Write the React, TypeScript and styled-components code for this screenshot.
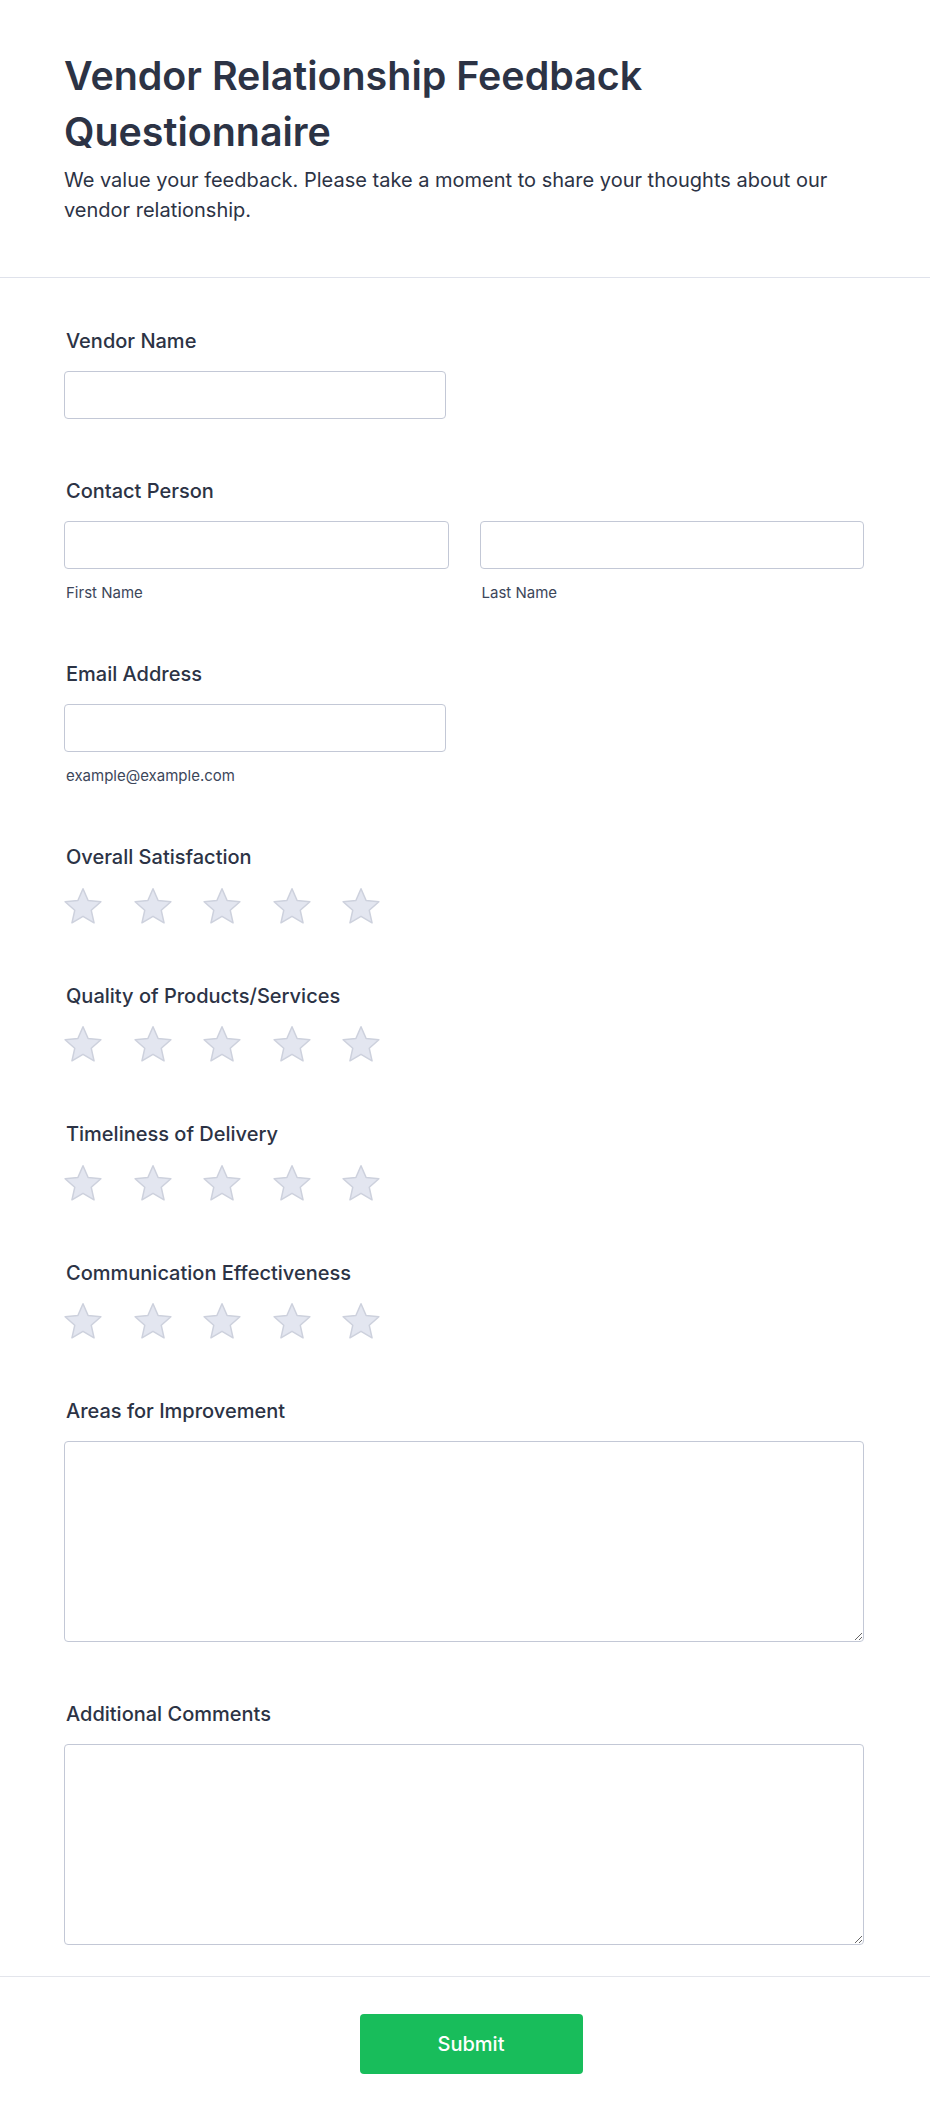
import styled, { createGlobalStyle } from "styled-components";

const GlobalStyle = createGlobalStyle`
  body {
    margin: 0;
    background: #ffffff;
    font-family: Inter, "Noto Sans", sans-serif;
    color: #2c3345;
  }
  * { box-sizing: border-box; }
`;

const Page = styled.div`
  width: 930px;
  background: #ffffff;
`;

const Header = styled.header`
  padding: 48px 66px 52px 64px;
  border-bottom: 1px solid #dfe2eb;
`;

const Title = styled.h1`
  margin: 0;
  font-size: 39.4px;
  line-height: 56px;
  font-weight: 600;
  color: #2c3345;
`;

const Subtitle = styled.p`
  margin: 5px 0 0;
  font-size: 20px;
  line-height: 30px;
  color: #2c3345;
`;

const FormBody = styled.div`
  display: flex;
  flex-direction: column;
  gap: 57px;
  padding: 48px 66px 31px 64px;
  border-bottom: 1px solid #e3e5ec;
`;

const Field = styled.div`
  display: flex;
  flex-direction: column;
`;

const Label = styled.label`
  font-size: 20px;
  line-height: 30px;
  font-weight: 500;
  padding-left: 2px;
  margin-bottom: 15px;
  color: #2c3345;
`;

const Input = styled.input<{ $half?: boolean }>`
  width: ${(p) => (p.$half ? "382px" : "100%")};
  height: 48px;
  border: 1px solid #c3c8d6;
  border-radius: 4px;
  padding: 0 12px;
  font: inherit;
  font-size: 16px;
  background: #fff;
  outline: none;
`;

const NameGrid = styled.div`
  display: grid;
  grid-template-columns: 1fr 1fr;
  column-gap: 31px;
`;

const Column = styled.div`
  display: flex;
  flex-direction: column;
`;

const SubLabel = styled.span`
  margin-top: 14px;
  padding-left: 2px;
  font-size: 15px;
  line-height: 19px;
  color: #3c465a;
`;

const Stars = styled.div`
  display: flex;
  gap: 31.5px;
  padding-top: 0.5px;
`;

const TextArea = styled.textarea`
  width: 100%;
  height: 201px;
  border: 1px solid #c3c8d6;
  border-radius: 4px;
  padding: 10px 12px;
  font: inherit;
  font-size: 16px;
  resize: vertical;
  outline: none;
`;

const Footer = styled.div`
  display: flex;
  justify-content: center;
  padding: 37px 0 49px 12px;
`;

const SubmitButton = styled.button`
  width: 223px;
  height: 60px;
  border: none;
  border-radius: 4px;
  background: #18bd5b;
  color: #ffffff;
  font-family: Inter, sans-serif;
  font-size: 20px;
  font-weight: 500;
  cursor: pointer;
`;

const Star = () => (
  <svg width="38" height="36" viewBox="0 0 38 36">
    <polygon
      points="19,0.8 24.11,12.56 36.88,13.79 27.27,22.29 30.05,34.81 19,28.3 7.95,34.81 10.73,22.29 1.12,13.79 13.89,12.56"
      fill="#e3e6f0"
      stroke="#cdd1dd"
      strokeWidth="1.5"
      strokeLinejoin="round"
    />
  </svg>
);

const Rating = ({ label }: { label: string }) => (
  <Field>
    <Label>{label}</Label>
    <Stars>
      {[1, 2, 3, 4, 5].map((n) => (
        <Star key={n} />
      ))}
    </Stars>
  </Field>
);

const App = () => {
  return (
    <Page>
      <GlobalStyle />
      <Header>
        <Title>Vendor Relationship Feedback Questionnaire</Title>
        <Subtitle>
          We value your feedback. Please take a moment to share your thoughts about our vendor relationship.
        </Subtitle>
      </Header>
      <FormBody>
        <Field>
          <Label>Vendor Name</Label>
          <Input $half />
        </Field>
        <Field>
          <Label>Contact Person</Label>
          <NameGrid>
            <Column>
              <Input />
              <SubLabel>First Name</SubLabel>
            </Column>
            <Column>
              <Input />
              <SubLabel>Last Name</SubLabel>
            </Column>
          </NameGrid>
        </Field>
        <Field>
          <Label>Email Address</Label>
          <Input $half type="email" />
          <SubLabel>example@example.com</SubLabel>
        </Field>
        <Rating label="Overall Satisfaction" />
        <Rating label="Quality of Products/Services" />
        <Rating label="Timeliness of Delivery" />
        <Rating label="Communication Effectiveness" />
        <Field>
          <Label>Areas for Improvement</Label>
          <TextArea />
        </Field>
        <Field>
          <Label>Additional Comments</Label>
          <TextArea />
        </Field>
      </FormBody>
      <Footer>
        <SubmitButton>Submit</SubmitButton>
      </Footer>
    </Page>
  );
};

export default App;
